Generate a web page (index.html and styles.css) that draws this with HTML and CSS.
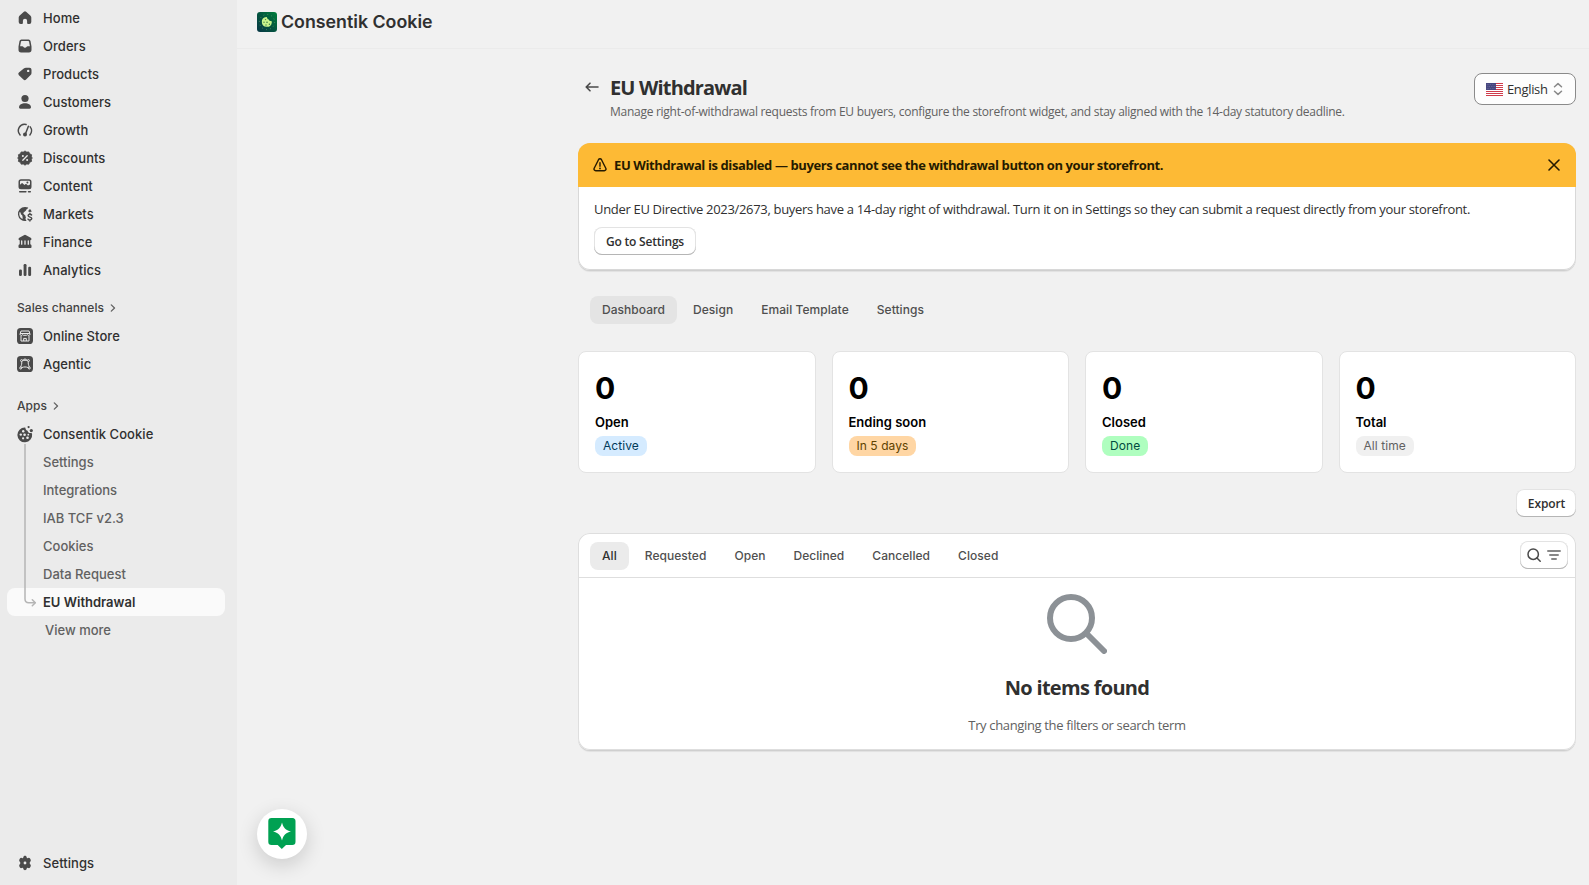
FILE: index.html
```html
<!DOCTYPE html>
<html lang="en">
<head>
<meta charset="utf-8">
<title>Consentik Cookie</title>
<link rel="stylesheet" href="styles.css">
</head>
<body>
<div class="app">
  <aside class="sidebar">
    <nav class="nav">
      <a class="item"><svg class="ico" viewBox="0 0 16 16"><path d="M6.9 1.7a1.6 1.6 0 0 1 2.2 0l4.2 3.7c.6.6 1 1.300 1 2.100V12a2 2 0 0 1-2 2h-1.200a1 1 0 0 1-1-1v-2.200a2.100 2.100 0 0 0-4.200 0V13a1 1 0 0 1-1 1H3.700a2 2 0 0 1-2-2V7.500c0-.8.4-1.500 1-2.100z"/></svg>Home</a>
      <a class="item"><svg class="ico" viewBox="0 0 16 16"><path fill-rule="evenodd" d="M4.500 1.500h7a2 2 0 0 1 2 1.600l1 5.400v3.300a2.600 2.600 0 0 1-2.600 2.600H4.100a2.600 2.600 0 0 1-2.600-2.600V8.500l1-5.400a2 2 0 0 1 2-1.600zm.3 1.400a.8.8 0 0 0-.8.7l-.9 4.600h2.300a1 1 0 0 1 .9.600 1.900 1.900 0 0 0 3.400 0 1 1 0 0 1 .9-.6h2.300l-.9-4.600a.8.800 0 0 0-.8-.7z"/></svg>Orders</a>
      <a class="item"><svg class="ico" viewBox="0 0 16 16"><path fill-rule="evenodd" d="M9 1.700h3.500a2 2 0 0 1 2 2v3.200c0 .8-.3 1.500-.9 2.100l-4.500 4.600a1.900 1.900 0 0 1-2.700 0L1.900 9.300a1.900 1.900 0 0 1 0-2.700l4.900-4.100c.6-.5 1.400-.8 2.200-.8zm2.200 2a1.200 1.200 0 1 0 0 2.400 1.200 1.200 0 0 0 0-2.400z"/></svg>Products</a>
      <a class="item"><svg class="ico" viewBox="0 0 16 16"><circle cx="8" cy="4.500" r="3.600"/><path d="M2 13.300c0-2.400 2.700-4 6-4s6 1.600 6 4c0 .8-.6 1.400-1.400 1.400H3.400c-.8 0-1.400-.6-1.400-1.400z"/></svg>Customers</a>
      <a class="item"><svg class="ico line" viewBox="0 0 16 16"><path d="M3.100 12.900a6.200 6.200 0 0 1 6-10.300M12.900 12.900a6.200 6.200 0 0 0 .3-8M11.400 4.200 8.400 12"/><circle class="solid" cx="8" cy="12.600" r="2"/></svg>Growth</a>
      <a class="item"><svg class="ico" viewBox="0 0 16 16"><path class="seal" d="m8 .9 1.700 1.200 2.100-.2.900 1.900 1.900.9-.2 2.100L15.300 8l-.9 1.300.2 2.100-1.900.9-.9 1.900-2.100-.2L8 15.200 6.300 14l-2.100.2-.9-1.900-1.900-.9.200-2.100L.7 8l.9-1.200-.2-2.100 1.900-.9.900-1.900 2.100.2z"/><path class="cut" d="m5.800 10.300 4.400-4.600"/><circle class="hole" cx="5.900" cy="6.100" r="1"/><circle class="hole" cx="10.100" cy="9.900" r="1"/></svg>Discounts</a>
      <a class="item"><svg class="ico" viewBox="0 0 16 16"><path fill-rule="evenodd" d="M4 1.200h8a2.500 2.500 0 0 1 2.500 2.500v5A2.500 2.500 0 0 1 12 11.200H4a2.500 2.500 0 0 1-2.500-2.500v-5A2.500 2.500 0 0 1 4 1.200zM3 6.800l1.400-1.400a1 1 0 0 1 1.400 0l1.700 1.600.8-.7a1 1 0 0 1 1.300 0L11 7.600l2-1V3.700a1 1 0 0 0-1-1H4a1 1 0 0 0-1 1zM10.400 3.600a1 1 0 1 0 0 2 1 1 0 0 0 0-2z"/><rect x="2" y="12.900" width="7.600" height="1.500" rx=".7"/><rect x="10.800" y="12.900" width="3.200" height="1.500" rx=".7"/></svg>Content</a>
      <a class="item"><svg class="ico" viewBox="0 0 16 16"><path fill-rule="evenodd" d="M8 .900a7 7 0 1 0 1.600 13.800c-.7-.4-1.100-1.100-1.100-1.900 0-.5.2-.9.500-1.300-.4-.5-.6-1.100-.5-1.700L6.700 8.100c-.5-.5-.4-1.200 0-1.700l2-1.600c.5-.5.500-1.300 1.200-1.800l1.200-.8v-.700A7 7 0 0 0 8 .9zM2.600 6.100c.7.200 1.200.8 1.200 1.600 0 .9 1.200 1 1.500 1.900.3 1 .5 2.300.3 3.500A5.500 5.500 0 0 1 2.600 6.100z"/><path d="M13 2.900a7 7 0 0 1 1.700 2.800l-2.400.3c-.9 0-1.300-.8-.8-1.500z"/><path class="stroke" d="M14.600 9c-.4-.6-1-.8-1.700-.8-1 0-1.800.5-1.800 1.400 0 2 3.700 1 3.700 3 0 .9-.9 1.400-1.900 1.400-.8 0-1.500-.3-1.900-.9M12.900 7.100v1M12.900 14v1.100"/></svg>Markets</a>
      <a class="item"><svg class="ico" viewBox="0 0 16 16"><path d="M6.900 1.200a2 2 0 0 1 2.200 0l4.600 2.500c1.300.8.900 2.500-.4 2.600v4c.7.200 1.200.8 1.200 1.600v1c0 .6-.4 1-1 1h-11a1 1 0 0 1-1-1v-1c0-.8.500-1.400 1.200-1.600v-4c-1.300-.1-1.700-1.800-.4-2.600z"/><path class="cut" d="M4.700 6.900v3.300M8 6.900v3.300M11.300 6.900v3.300"/></svg>Finance</a>
      <a class="item"><svg class="ico" viewBox="0 0 16 16"><rect x="2" y="7.500" width="2.900" height="6.500" rx="1.200"/><rect x="6.600" y="2" width="2.900" height="12" rx="1.200"/><rect x="11.200" y="4.800" width="2.900" height="9.200" rx="1.200"/></svg>Analytics</a>
    </nav>

    <div class="group channels">Sales channels<svg class="chev" viewBox="0 0 8 8"><path d="M2.300.9 5.500 4 2.300 7.100"/></svg></div>
    <nav class="nav">
      <a class="item"><svg class="ico" viewBox="0 0 16 16"><rect width="16" height="16" rx="3.600"/><path class="thin" d="M4 3h8l1 3.300a1.400 1.400 0 0 1-2.700.2 1.500 1.500 0 0 1-2.300.6 1.500 1.500 0 0 1-2.300-.6A1.400 1.400 0 0 1 3 6.300zM3.300 5.500h9.400M4 8v5h8V8M6.700 13v-2.600h2.600V13"/></svg>Online Store</a>
      <a class="item"><svg class="ico" viewBox="0 0 16 16"><rect width="16" height="16" rx="3.600"/><path class="thin" d="M5.600 4.300h4.800M4.600 5.600c.6 1.700-.2 3.600-.9 5.400M11.400 5.600c-.6 1.700.2 3.600.9 5.400M4.800 11.600c2-.9 4.400-.9 6.400 0M6.300 3.800 8 2.900l1.700.9"/><circle class="thin" cx="4.600" cy="4.600" r="1"/><circle class="thin" cx="11.400" cy="4.600" r="1"/><circle class="thin" cx="3.700" cy="12" r="1"/><circle class="thin" cx="12.300" cy="12" r="1"/></svg>Agentic</a>
    </nav>

    <div class="group apps">Apps<svg class="chev" viewBox="0 0 8 8"><path d="M2.300.9 5.500 4 2.300 7.100"/></svg></div>
    <nav class="nav">
      <a class="item"><svg class="ico" viewBox="0 0 16 16"><path d="M8 1.500c.2 0 .5.500.5 1 .2 1.200 1 2 2.100 2.200.3 1.500 1.400 2.400 3 2.300.9 0 1.500.3 1.500.9A7.400 7.400 0 1 1 8 1.500z"/><circle cx="11.600" cy="1.100" r="1.100"/><circle cx="14.300" cy="4.600" r="1.600"/><g class="hole"><circle cx="6.200" cy="5.300" r="1.200"/><circle cx="3.800" cy="8.600" r="1.200"/><circle cx="7.600" cy="8.700" r="1.300"/><circle cx="6.100" cy="12.300" r="1.100"/><circle cx="10.500" cy="11.800" r="1.300"/><circle cx="11.300" cy="8.700" r=".9"/></g></svg>Consentik Cookie</a>
      <div class="sub">
        <a class="item">Settings</a>
        <a class="item">Integrations</a>
        <a class="item">IAB TCF v2.3</a>
        <a class="item">Cookies</a>
        <a class="item">Data Request</a>
        <a class="item current">EU Withdrawal</a>
        <svg class="branch" viewBox="0 0 14 164"><path class="rail" d="M2 0v155q0 3.700 3.700 3.700H12"/><path class="rail" d="m9.300 155.700 3 3-3 3"/></svg>
      </div>
      <a class="item more">View more</a>
    </nav>
    <a class="item bottom"><svg class="ico" viewBox="0 0 16 16"><path fill-rule="evenodd" d="M6.400 1.900C6.600 1.200 7.200.8 8 .8s1.400.4 1.600 1.100l.4 1.300 1.300-.3c.8-.2 1.500.1 1.900.8l.4.700c.4.700.3 1.400-.2 2L12.500 8l.9 1.600c.5.600.6 1.300.2 2l-.4.700c-.4.700-1.100 1-1.900.8l-1.300-.3-.4 1.300c-.2.700-.8 1.100-1.600 1.100s-1.400-.4-1.600-1.100L6 12.800l-1.300.3c-.8.200-1.500-.1-1.900-.8l-.4-.7c-.4-.7-.3-1.400.2-2L3.500 8l-.9-1.600c-.5-.6-.6-1.300-.2-2l.4-.7c.4-.7 1.100-1 1.900-.8l1.300.3zM8 6.600a1.400 1.400 0 1 0 0 2.800 1.400 1.400 0 0 0 0-2.800z"/></svg>Settings</a>
  </aside>

  <main class="main">
    <header class="topbar">
      <svg class="logo" viewBox="0 0 20 20"><defs><linearGradient id="lg" x1="1" y1="0" x2="0" y2="1"><stop offset="0" stop-color="#00803c"/><stop offset=".5" stop-color="#04553f"/><stop offset="1" stop-color="#073646"/></linearGradient></defs><rect width="20" height="20" rx="3" fill="url(#lg)"/><circle class="dots" cx="10" cy="10" r="7.600"/><path class="cookie" d="M9.300 4.900c.6 0 .8.300.8.900.1.900.6 1.500 1.500 1.500.2 1.100.9 1.600 1.900 1.600.9 0 1.500.4 1.300 1.500a5 5 0 1 1-5.500-5.500z"/><g class="chips"><circle cx="8.500" cy="7.600" r=".7"/><circle cx="7" cy="10.300" r=".7"/><circle cx="10" cy="10.300" r=".8"/><circle cx="9" cy="13" r=".7"/><circle cx="12.400" cy="12.300" r=".7"/></g></svg>
      <span>Consentik Cookie</span>
    </header>

    <section class="page">
      <div class="head">
        <svg class="back" viewBox="0 0 14 10"><path d="M13 5H1.400M5 1.200 1.200 5 5 8.800"/></svg>
        <div class="titles">
          <h1>EU Withdrawal</h1>
          <p>Manage right-of-withdrawal requests from EU buyers, configure the storefront widget, and stay aligned with the 14-day statutory deadline.</p>
        </div>
        <div class="select">
          <svg class="flag" viewBox="0 0 17 13"><rect width="17" height="13" fill="#fff"/><path stroke="#cf3b4b" d="M0 .5h17M0 2.500h17M0 4.500h17M0 6.500h17M0 8.500h17M0 10.500h17M0 12.500h17"/><rect width="10" height="7" fill="#46467f"/><path stroke="#8486ad" stroke-width=".6" stroke-dasharray=".7 1" d="M.8 1.500h9M1.600 3.500h8M.8 5.500h9"/></svg>
          <span>English</span>
          <svg class="updown" viewBox="0 0 10 14"><path d="M1.500 4.800 5 1.600l3.500 3.200M1.500 9.200 5 12.400l3.500-3.200"/></svg>
        </div>
      </div>

      <div class="banner">
        <div class="banner-top">
          <svg class="warn" viewBox="0 0 14 14"><path d="M5.500 1.700a1.700 1.700 0 0 1 3 0l4.300 8.600c.6 1.200-.2 2.400-1.500 2.400H2.700c-1.300 0-2.100-1.200-1.500-2.400zM7 4.600v3.600"/><circle class="dot" cx="7" cy="10.400" r=".9"/></svg>
          <strong>EU Withdrawal is disabled — buyers cannot see the withdrawal button on your storefront.</strong>
          <svg class="close" viewBox="0 0 12 12"><path d="m1 1 10 10M11 1 1 11"/></svg>
        </div>
        <div class="banner-body">
          <p>Under EU Directive 2023/2673, buyers have a 14-day right of withdrawal. Turn it on in Settings so they can submit a request directly from your storefront.</p>
          <button class="btn go">Go to Settings</button>
        </div>
      </div>

      <div class="tabs">
        <span class="tab on">Dashboard</span><span class="tab">Design</span><span class="tab">Email Template</span><span class="tab">Settings</span>
      </div>

      <div class="cards">
        <div class="card"><b class="num">0</b><span class="label">Open</span><span class="badge info">Active</span></div>
        <div class="card"><b class="num">0</b><span class="label">Ending soon</span><span class="badge caution">In 5 days</span></div>
        <div class="card"><b class="num">0</b><span class="label">Closed</span><span class="badge success">Done</span></div>
        <div class="card"><b class="num">0</b><span class="label">Total</span><span class="badge">All time</span></div>
      </div>

      <button class="btn export">Export</button>

      <div class="table">
        <div class="filters">
          <span class="tab on">All</span><span class="tab">Requested</span><span class="tab">Open</span><span class="tab">Declined</span><span class="tab">Cancelled</span><span class="tab">Closed</span>
          <button class="btn search">
            <svg class="glass" viewBox="0 0 14 14"><circle cx="6.200" cy="6.200" r="5.200"/><path d="m10 10 3.200 3.200"/></svg>
            <svg class="bars" viewBox="0 0 14 10"><path d="M.8 1h12.400M2.800 5h8.400M4.800 9h4.400"/></svg>
          </button>
        </div>
        <div class="empty">
          <svg class="big" viewBox="0 0 60 60"><circle cx="24" cy="24" r="21"/><path d="m40 40 17 17"/></svg>
          <h2>No items found</h2>
          <p>Try changing the filters or search term</p>
        </div>
      </div>
    </section>
    <div class="chat"><svg viewBox="0 0 28 32"><path fill="#00a152" d="M3.500 0h21A3.200 3.200 0 0 1 27.500 3.200v20.600a3.200 3.200 0 0 1-3.200 3.200H18l-4.200 4-4.100-4H3.500a3.200 3.200 0 0 1-3.200-3.200V3.200A3.200 3.200 0 0 1 3.500 0z"/><path fill="#fff" d="M14 4.500c1.300 5.200 3.600 7.600 9 9-5.400 1.400-7.700 3.800-9 9-1.300-5.200-3.600-7.600-9-9 5.400-1.400 7.700-3.800 9-9z"/></svg></div>
  </main>
</div>
</body>
</html>
```
FILE: styles.css
```css
* { box-sizing: border-box; }
body { margin: 0; background: #f1f1f1; color: #303030; font: 13px/20px Inter, "Liberation Sans", sans-serif; }
p, h1, h2 { margin: 0; }
svg { display: block; flex: none; }
.app { display: flex; height: 885px; overflow: hidden; }

/* Sidebar */
.sidebar { width: 237px; flex: none; background: #ebebeb; padding: 4px 12px 8px 7px; display: flex; flex-direction: column; }
.item { display: flex; align-items: center; height: 28px; padding-left: 10px; gap: 10px; font-weight: 550; letter-spacing: .05px; border-radius: 8px; white-space: nowrap; }
.ico { width: 16px; height: 16px; fill: #4a4a4a; overflow: visible; }
.line { fill: none; stroke: #4a4a4a; stroke-width: 1.5; stroke-linecap: round; }
.seal { stroke: #4a4a4a; stroke-width: .8; stroke-linejoin: round; }
.solid { fill: #4a4a4a; stroke: none; }
.stroke { fill: none; stroke: #4a4a4a; stroke-width: 1.4; stroke-linecap: round; }
.cut { fill: none; stroke: #ebebeb; stroke-width: 1.3; stroke-linecap: round; }
.hole { fill: #ebebeb; }
.thin { fill: none; stroke: #ebebeb; stroke-width: 1; stroke-linejoin: round; }
.group { display: flex; align-items: center; gap: 5px; height: 28px; padding-left: 10px; font-size: 12px; font-weight: 550; letter-spacing: .06px; color: #424242; }
.channels { margin: 10px 0 0; }
.apps { margin: 14px 0 0; }
.chev { width: 8px; height: 8px; fill: none; stroke: #616161; stroke-width: 1.3; stroke-linecap: round; stroke-linejoin: round; }
.sub { position: relative; }
.sub .item { padding-left: 36px; font-weight: 450; letter-spacing: 0; color: #616161; }
.sub .current { background: #fafafa; font-weight: 600; color: #303030; width: 218px; }
.branch { position: absolute; left: 16px; top: -4px; width: 14px; height: 164px; }
.rail { fill: none; stroke: #b5b5b5; stroke-width: 1.5; stroke-linecap: round; stroke-linejoin: round; }
.more { padding-left: 38px; font-weight: 450; letter-spacing: 0; color: #616161; }
.bottom { margin-top: auto; }

/* Main column */
.main { flex: 1; min-width: 0; position: relative; }
.topbar { height: 49px; border-bottom: 1px solid #ebebeb; display: flex; align-items: center; gap: 4px; padding: 0 20px 5px; font-size: 17.800px; font-weight: 600; }
.logo { width: 20px; height: 20px; }
.dots { fill: none; stroke: #6da66b; stroke-width: .8; stroke-dasharray: .8 3.200; }
.cookie { fill: #c9f48b; }
.chips { fill: #3f7f48; }
.page { width: 998px; margin-left: 341px; padding-top: 24px; display: flex; flex-direction: column; }
.head, .banner, .go, .export, .empty { font-family: "Open Sans", "Noto Sans", sans-serif; }
.head { display: flex; height: 70px; }
.back { width: 14px; height: 10px; margin: 9px 11px 0 7px; fill: none; stroke: #4a4a4a; stroke-width: 1.600; stroke-linecap: round; stroke-linejoin: round; }
.titles { flex: 1; min-width: 0; }
.titles h1 { font-size: 20px; line-height: 28px; font-weight: 700; letter-spacing: -.83px; white-space: nowrap; padding-top: 1px; }
.titles p { font-size: 12px; line-height: 20px; color: #616161; white-space: nowrap; letter-spacing: -.275px; }
.select { width: 102px; height: 32px; border: 1px solid #8a8a8a; border-radius: 8px; background: #fdfdfd; display: flex; align-items: center; padding-left: 11px; }
.flag { width: 17px; height: 13px; margin-right: 4px; }
.select span { width: 46px; letter-spacing: -.35px; }
.updown { width: 10px; height: 14px; fill: none; stroke: #8a8a8a; stroke-width: 1.500; stroke-linecap: round; stroke-linejoin: round; }

.banner { height: 127px; border-radius: 12px; background: #fff; overflow: hidden; box-shadow: 0 1px 0 #cfcfcf, 0 3px 1px -1px rgba(26,26,26,.07), inset 0 0 0 1px #d8d8d8; }
.banner-top { height: 44px; background: #fdba35; display: flex; align-items: center; padding: 0 16px 0 15px; color: #251a00; }
.warn { width: 14px; height: 14px; fill: none; stroke: #251a00; stroke-width: 1.400; stroke-linecap: round; }
.dot { fill: #251a00; stroke: none; }
.banner strong { margin-left: 7px; font-size: 13px; font-weight: 700; letter-spacing: -.4px; flex: 1; white-space: nowrap; }
.close { width: 12px; height: 12px; fill: none; stroke: #251a00; stroke-width: 1.600; stroke-linecap: round; }
.banner-body { padding: 12px 16px; }
.banner-body p { white-space: nowrap; letter-spacing: -.318px; }
.btn { display: flex; align-items: center; justify-content: center; height: 28px; border: 0; padding: 0; border-radius: 8px; background: #fff; color: #303030; font-size: 12px; font-weight: 600; box-shadow: inset 0 -1px 0 #b5b5b5, inset 0 0 0 1px #e3e3e3; white-space: nowrap; }
.go { width: 102px; margin-top: 8px; letter-spacing: -.2px; }

.tabs { display: flex; gap: 4px; padding: 26px 12px 27px; }
.tab { height: 28px; line-height: 28px; padding: 0 12px; border-radius: 8px; font-size: 12px; font-weight: 550; letter-spacing: .05px; color: #4f4f4f; }
.tab.on { background: #e4e4e4; }

.cards { display: grid; grid-template-columns: repeat(4, 1fr); gap: 16px; }
.card { height: 122px; background: #fff; border: 1px solid #e3e3e3; border-radius: 8px; padding: 19px 16px 0; display: flex; flex-direction: column; align-items: flex-start; color: #000; }
.num { font-size: 30px; line-height: 34px; font-weight: 700; }
.label { margin-top: 7px; font-weight: 600; line-height: 20px; }
.badge { margin-top: 4px; height: 20px; line-height: 20px; padding: 0 8px; border-radius: 8px; font-size: 12px; font-weight: 400; letter-spacing: .06px; background: #f0f0f0; color: #616161; }
.info { background: #d5ebff; color: #003a5a; }
.caution { background: #ffd6a4; color: #5e4200; }
.success { background: #affebf; color: #014b40; }
.export { width: 60px; padding-left: 1px; margin: 16px 0 16px auto; letter-spacing: -.1px; }

.table { height: 217px; background: #fff; border-radius: 12px; box-shadow: 0 1px 0 #cfcfcf, 0 3px 1px -1px rgba(26,26,26,.07), inset 0 0 0 1px #dedede; }
.filters { height: 45px; border-bottom: 1px solid #dedede; display: flex; gap: 4px; padding: 9px 8px 0 12px; }
.filters .on { background: #ebebeb; color: #303030; }
.search { width: 48px; margin: -1px 0 0 auto; gap: 6px; }
.glass, .bars { fill: none; stroke: #4a4a4a; stroke-width: 1.500; stroke-linecap: round; width: 14px; height: 14px; }
.bars { height: 10px; stroke: #616161; }
.empty { display: flex; flex-direction: column; align-items: center; padding-top: 16px; }
.big { width: 60px; height: 60px; fill: none; stroke: #8c9196; stroke-width: 6; stroke-linecap: round; }
.empty h2 { margin-top: 20px; font-size: 20px; line-height: 28px; font-weight: 700; letter-spacing: -.7px; }
.empty p { margin-top: 13px; color: #616161; letter-spacing: -.35px; }

.chat { position: absolute; left: 20px; top: 809px; width: 50px; height: 50px; border-radius: 50%; background: #fff; display: flex; justify-content: center; padding-top: 9px; box-shadow: 0 6px 20px rgba(0,0,0,.16); }
.chat svg { width: 28px; height: 32px; }
```
